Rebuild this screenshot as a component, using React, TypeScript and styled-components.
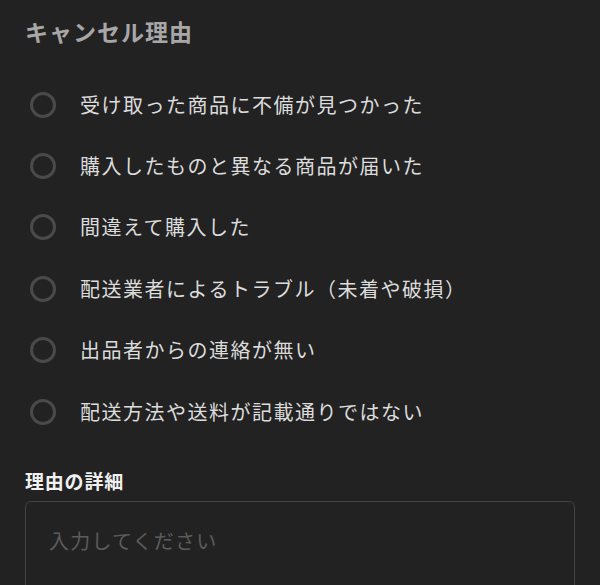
import styled, { createGlobalStyle } from 'styled-components';

const GlobalStyle = createGlobalStyle`
  html, body {
    margin: 0;
    padding: 0;
    background: #222222;
  }
  body {
    font-family: "Noto Sans CJK JP", "Noto Sans", sans-serif;
  }
`;

const Page = styled.div`
  background: #222222;
  height: 585px;
  overflow: hidden;
  padding: 0 25px;
  box-sizing: border-box;
`;

const Title = styled.h2`
  margin: 0;
  padding-top: 16px;
  font-size: 23px;
  line-height: 30px;
  font-weight: 700;
  letter-spacing: 1px;
  color: #a7a7a7;
`;

const ReasonList = styled.div`
  margin-top: 28px;
  display: flex;
  flex-direction: column;
`;

const Row = styled.label`
  display: flex;
  align-items: center;
  height: 61.4px;
  gap: 24px;
  padding-left: 5px;
  cursor: pointer;
`;

const Radio = styled.input.attrs({ type: 'radio' })`
  appearance: none;
  margin: 0;
  width: 26px;
  height: 26px;
  border-radius: 50%;
  border: 3px solid #4a4a4a;
  box-sizing: border-box;
  flex-shrink: 0;
  &:checked {
    border: 7px solid #e0e0e0;
  }
`;

const RowText = styled.span`
  font-size: 20px;
  letter-spacing: 1.5px;
  color: #dcdcdc;
  line-height: 26px;
`;

const DetailLabel = styled.div`
  margin-top: 26px;
  font-size: 19px;
  line-height: 26px;
  font-weight: 700;
  letter-spacing: 0.8px;
  color: #f0f0f0;
`;

const Detail = styled.textarea`
  display: block;
  margin-top: 7px;
  width: 100%;
  height: 140px;
  box-sizing: border-box;
  background: #222222;
  border: 1.5px solid #444444;
  border-radius: 6px;
  padding: 26px 23px;
  font-family: inherit;
  font-size: 20px;
  line-height: 26px;
  letter-spacing: 1.2px;
  color: #e0e0e0;
  resize: none;
  outline: none;
  &::placeholder {
    color: #5c5c5c;
  }
`;

const reasons = [
  '受け取った商品に不備が見つかった',
  '購入したものと異なる商品が届いた',
  '間違えて購入した',
  '配送業者によるトラブル（未着や破損）',
  '出品者からの連絡が無い',
  '配送方法や送料が記載通りではない',
];

export default function App() {
  return (
    <>
      <GlobalStyle />
      <Page>
        <Title>キャンセル理由</Title>
        <ReasonList>
          {reasons.map((r) => (
            <Row key={r}>
              <Radio name="reason" />
              <RowText>{r}</RowText>
            </Row>
          ))}
        </ReasonList>
        <DetailLabel>理由の詳細</DetailLabel>
        <Detail placeholder="入力してください" />
      </Page>
    </>
  );
}
